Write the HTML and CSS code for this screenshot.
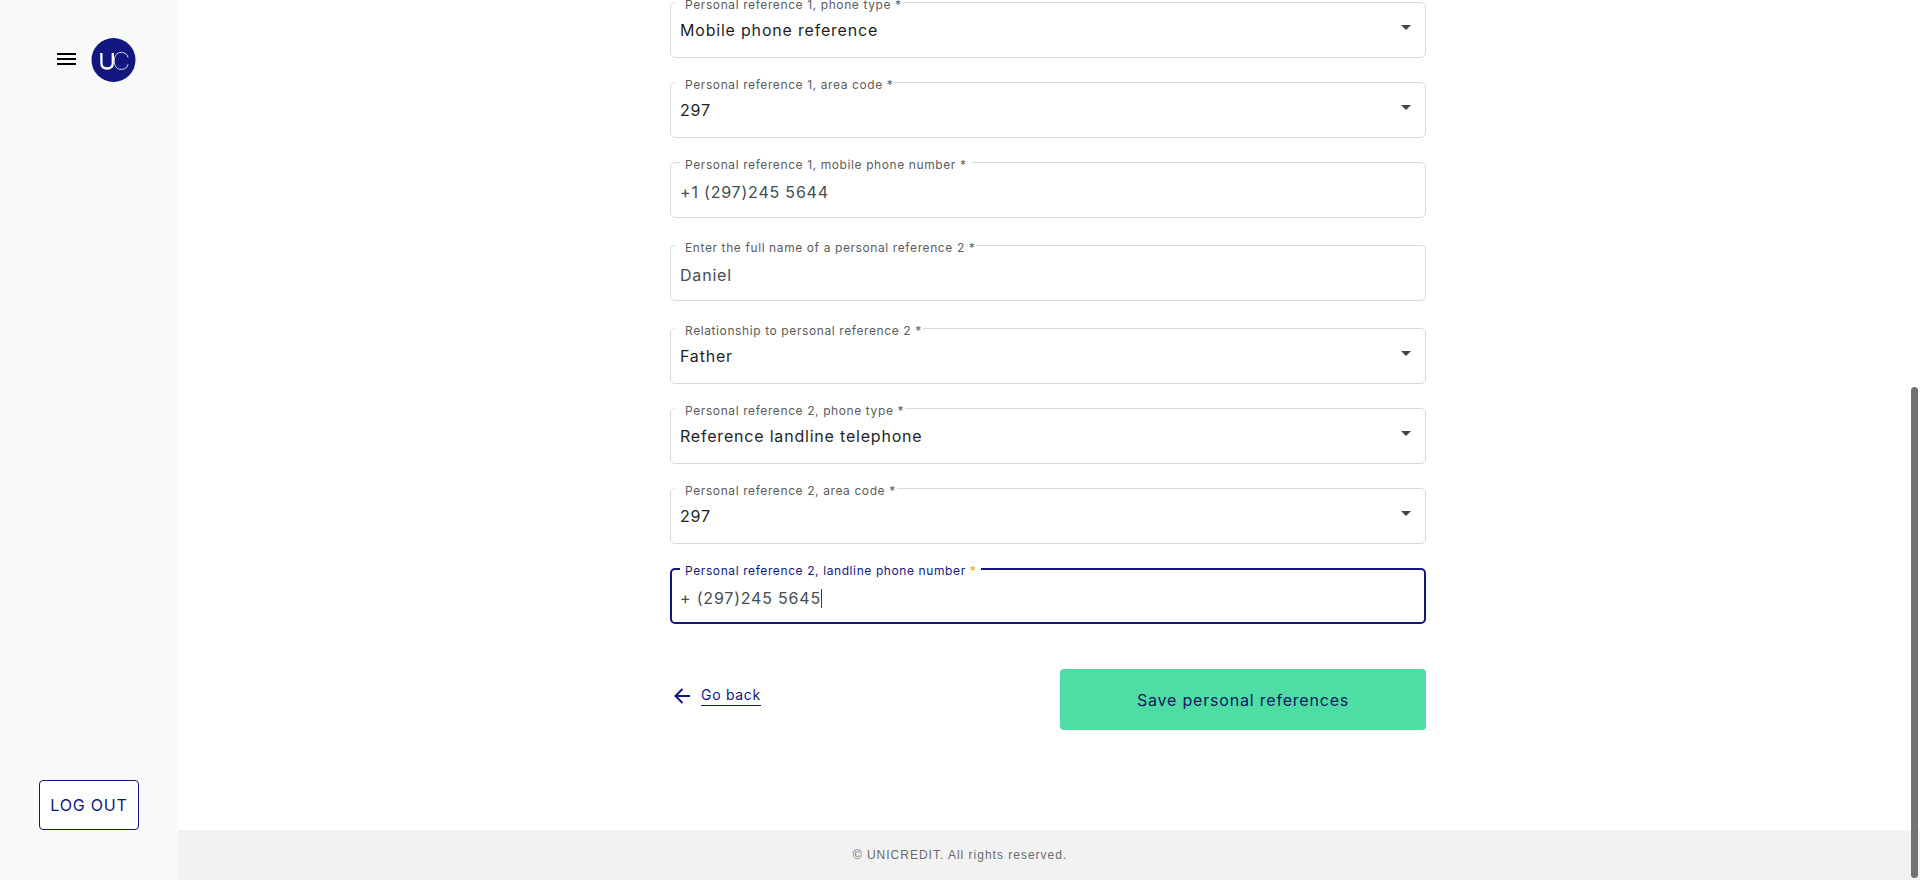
FILE: index.html
```html
<!DOCTYPE html>
<html lang="en">
<head>
<meta charset="utf-8">
<title>Personal references</title>
<link rel="stylesheet" href="styles.css">
</head>
<body>
<div class="layout">
  <aside class="sidebar">
    <div class="brand">
      <button class="menu" type="button" aria-label="Menu">
        <svg width="19" height="14" viewBox="0 0 19 14"><path d="M0 1h19M0 6h19M0 11h19" stroke="#000" stroke-width="2"/></svg>
      </button>
      <svg class="logo" width="45" height="44" viewBox="0 0 45 44" role="img" aria-label="UC">
        <circle cx="22.500" cy="22" r="22" fill="#11177f"/>
        <path d="M10.400 15v9.700q0 5.800 5.700 5.800t5.700-5.800v-9.700" fill="none" stroke="#fff" stroke-width="2.300"/>
        <path d="M37 19.500C36.500 16.300 34 14.400 30.300 14.400 25.800 14.400 23.300 17.500 23.300 22.900S25.800 31.400 30.300 31.400C34 31.400 36.500 29.500 37 26.200" fill="none" stroke="#d5d6ec" stroke-width="1"/>
      </svg>
    </div>
    <button class="logout" type="button">LOG OUT</button>
  </aside>

  <div class="page">
    <main class="main">
      <form class="form">
        <div class="group">
          <div class="field">
            <label class="label" for="type1">Personal reference 1, phone type *</label>
            <select class="control select" id="type1"><option>Mobile phone reference</option></select>
            <span class="arrow"></span>
          </div>
          <div class="field">
            <label class="label" for="area1">Personal reference 1, area code *</label>
            <select class="control select" id="area1"><option>297</option></select>
            <span class="arrow"></span>
          </div>
          <div class="field">
            <label class="label label-inset" for="phone1">Personal reference 1, mobile phone number *</label>
            <input class="control input" id="phone1" type="tel" value="+1 (297)245 5644">
          </div>
        </div>
        <div class="group">
          <div class="field">
            <label class="label" for="name2">Enter the full name of a personal reference 2 *</label>
            <input class="control input" id="name2" type="text" value="Daniel">
          </div>
        </div>
        <div class="group">
          <div class="field">
            <label class="label" for="relation2">Relationship to personal reference 2 *</label>
            <select class="control select" id="relation2"><option>Father</option></select>
            <span class="arrow"></span>
          </div>
          <div class="field">
            <label class="label" for="type2">Personal reference 2, phone type *</label>
            <select class="control select" id="type2"><option>Reference landline telephone</option></select>
            <span class="arrow"></span>
          </div>
          <div class="field">
            <label class="label" for="area2">Personal reference 2, area code *</label>
            <select class="control select" id="area2"><option>297</option></select>
            <span class="arrow"></span>
          </div>
          <div class="field active">
            <label class="label label-inset" for="phone2">Personal reference 2, landline phone number <span class="required">*</span></label>
            <input class="control input" id="phone2" type="tel" value="+ (297)245 5645">
            <span class="caret"></span>
          </div>
        </div>
        <div class="actions">
          <a class="back" href="#">
            <svg width="16" height="16" viewBox="0 0 16 16"><path d="M8.500 1 1.500 8l7 7M1.500 8H16" fill="none" stroke="#11177f" stroke-width="2"/></svg>
            <span class="back-text">Go back</span>
          </a>
          <button class="save" type="submit">Save personal references</button>
        </div>
      </form>
    </main>
    <footer class="footer">© UNICREDIT. All rights reserved.</footer>
  </div>
</div>
<div class="scroll-thumb"></div>
</body>
</html>
```
FILE: styles.css
```css
* { box-sizing: border-box; }

body {
  margin: 0;
  background: #fff;
  font-family: Inter, "Liberation Sans", sans-serif;
  color: #11177f;
}

button, input, select {
  font: inherit;
  margin: 0;
}

button, input, select, label, a { letter-spacing: 0.05em; }

.layout { display: flex; min-height: 100vh; }

.sidebar {
  flex: 0 0 178px;
  display: flex;
  flex-direction: column;
  justify-content: space-between;
  align-items: center;
  padding: 38px 0 50px;
  background: #f9f9f9;
}

.brand { display: flex; align-items: center; gap: 15px; padding-left: 15px; }
.menu { display: flex; padding: 0; border: 0; background: none; }
.logo { display: block; }

.logout {
  width: 100px;
  height: 50px;
  padding: 0;
  border: 1px solid #11177f;
  border-radius: 4px;
  background: #fff;
  color: #11177f;
  font-size: 16px;
  white-space: nowrap;
}

.page { flex: 1; display: flex; flex-direction: column; }

.main { flex: 1; padding: 2px 2px 0 0; }

.form {
  width: 100%;
  max-width: 756px;
  margin: 0 auto;
  display: flex;
  flex-direction: column;
  gap: 27px;
}

.group { display: flex; flex-direction: column; gap: 24px; }

.field { position: relative; height: 56px; }

.label {
  position: absolute;
  top: -5px;
  left: 5px;
  padding: 0 1px 0 10px;
  background: #fff;
  font-size: 12px;
  line-height: 16px;
  color: #5c5c5c;
  white-space: nowrap;
}

.label-inset { left: 10px; padding: 0 5px; }

.control {
  display: block;
  width: 100%;
  height: 100%;
  border: 1px solid #dadada;
  border-radius: 5px;
  background: #fff;
  font-size: 16px;
  outline: none;
}

.select { appearance: none; padding: 0 40px 0 9px; color: #1f1f1f; }
.input { padding: 3px 9px 0; color: #454d50; }

.arrow {
  position: absolute;
  top: 23px;
  right: 15px;
  border: 5px solid transparent;
  border-top-color: #40454a;
  border-bottom: 0;
  pointer-events: none;
}

.active .control { border: 2px solid #11177f; padding: 3px 8px 0; }
.active .label { color: #11177f; }
.required { color: #f9a02c; }

.caret {
  position: absolute;
  top: 21px;
  left: 151px;
  width: 1px;
  height: 19px;
  background: #7d1850;
}

.actions {
  display: flex;
  justify-content: space-between;
  align-items: flex-start;
  padding-top: 18px;
}

.back {
  display: flex;
  align-items: center;
  gap: 11px;
  padding: 16px 0 0 4px;
  color: #11177f;
  font-size: 14px;
  line-height: 20px;
  text-decoration: none;
}

.back-text { border-bottom: 1px solid #11177f; }

.save {
  width: 366px;
  height: 61px;
  border: 0;
  border-radius: 4px;
  background: #4edea5;
  color: #12195c;
  font-size: 16px;
}

.footer {
  padding: 17px 178px 17px 0;
  background: #f2f2f2;
  color: #6b6b6b;
  font-family: "Liberation Sans", Arial, sans-serif;
  font-size: 12px;
  letter-spacing: 1px;
  line-height: 16px;
  text-align: center;
}

.scroll-thumb {
  position: fixed;
  top: 387px;
  right: 2px;
  bottom: 2px;
  width: 7px;
  border-radius: 4px;
  background: #727272;
}
```
